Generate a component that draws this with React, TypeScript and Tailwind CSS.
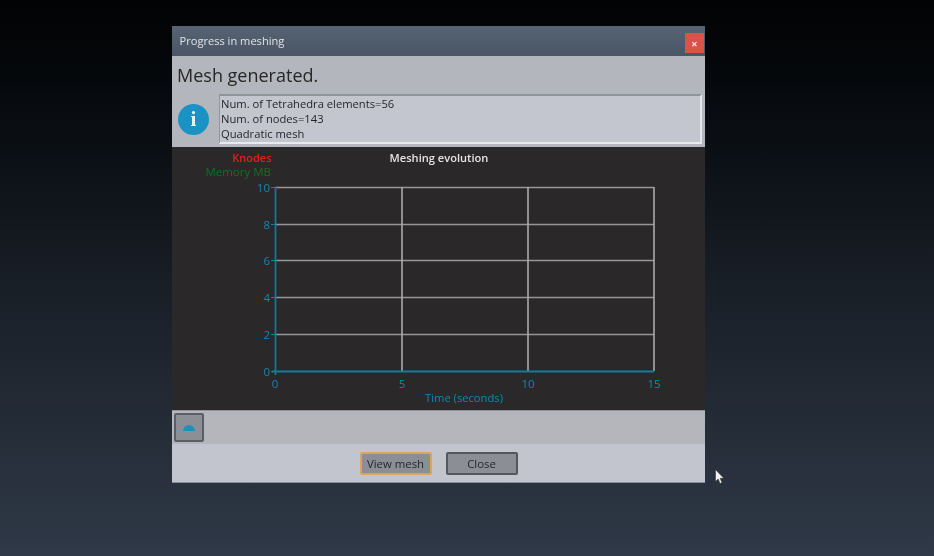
import React from "react";

const font = { fontFamily: '"Open Sans","Noto Sans",sans-serif' };
const ys: [number, string][] = [[40, "10"], [77, "8"], [113, "6"], [150, "4"], [187, "2"], [224, "0"]];
const xs: [number, string][] = [[103, "0"], [230, "5"], [356, "10"], [482, "15"]];

function Chart() {
  return (
    <svg width="533" height="263" viewBox="0 0 533 263" className="block" fontFamily='"Open Sans","Noto Sans",sans-serif'>
      <text x="99.5" y="14.5" textAnchor="end" fontSize="11" fontWeight="600" fill="#e5201a">Knodes</text>
      <text x="99" y="29" textAnchor="end" fontSize="11.5" fill="#0f7322">Memory MB</text>
      <text x="267" y="14.5" textAnchor="middle" fontSize="11.1" fontWeight="600" fill="#e4e4e4">Meshing evolution</text>
      {ys.slice(0, 5).map(([y]) => (
        <line key={y} x1="103" x2="482" y1={y + 0.5} y2={y + 0.5} stroke="#969696" strokeWidth="1.7" />
      ))}
      {xs.slice(1).map(([x]) => (
        <line key={x} x1={x} x2={x} y1="40" y2="224" stroke="#ababab" strokeWidth="1.6" />
      ))}
      <line x1="100" x2="482" y1="224.5" y2="224.5" stroke="#127d9c" strokeWidth="1.8" />
      <line x1="103.5" x2="103.5" y1="40" y2="228" stroke="#1a7590" strokeWidth="1.8" />
      {ys.map(([y, t]) => (
        <g key={t}>
          <line x1="99" x2="104" y1={y + 0.5} y2={y + 0.5} stroke="#127d9c" strokeWidth="1" />
          <text x="98" y={y + 4.5} textAnchor="end" fontSize="11.5" fill="#1488b2">{t}</text>
        </g>
      ))}
      {xs.map(([x, t]) => (
        <text key={t} x={x} y="240.5" textAnchor="middle" fontSize="11.5" fill="#1488b2">{t}</text>
      ))}
      <text x="292" y="254.5" textAnchor="middle" fontSize="11.2" fill="#1488b2">Time (seconds)</text>
    </svg>
  );
}

export default function App() {
  return (
    <div className="relative w-[934px] h-[556px] overflow-hidden bg-gradient-to-b from-[#020304] via-[#181e26] to-[#2f3947] pl-[172px] pt-[26px]" style={font}>
      <div className="flex w-[533px] h-[457px] flex-col border-b border-[#8a8e96] bg-[#c2c5cd] blur-[0.4px]">
        <div className="flex h-[30px] shrink-0 items-start justify-between bg-gradient-to-b from-[#566373] to-[#4a5666] pr-[1px]">
          <span className="pl-[7.5px] pt-[7px] text-[11.1px] leading-[16px] text-[#e0e3e8]">Progress in meshing</span>
          <div className="mt-[7px] flex h-[20px] w-[19px] items-center justify-center bg-[#d9534a] text-[11px] font-bold leading-none text-[#f5e9e6]">×</div>
        </div>
        <div className="flex h-[91px] shrink-0 flex-col bg-[#b3b6bc] pl-[5px] pr-[3px]">
          <div className="pt-[6px] text-[18px] leading-[26px] text-[#262626]">Mesh generated.</div>
          <div className="mt-[6px] flex items-center">
            <div className="ml-[1px] flex h-[31px] w-[31px] shrink-0 items-center justify-center rounded-full bg-[#1a93c4] font-['Liberation_Serif',serif] text-[21px] font-bold leading-none text-[#e8f4f9]">i</div>
            <div className="ml-[10px] h-[50px] flex-1 border-t-2 border-r-2 border-b-2 border-l border-t-[#8f939a] border-r-[#e4e6ec] border-b-[#e8eaef] border-l-[#92969d] bg-[#c3c6cf] pl-[1px] text-[11.2px] leading-[15px] text-[#1f2226]">
              <div>Num. of Tetrahedra elements=56</div>
              <div>Num. of nodes=143</div>
              <div>Quadratic mesh</div>
            </div>
          </div>
        </div>
        <div className="h-[264px] shrink-0 border-b border-[#8f9298] bg-[#2a2828]">
          <Chart />
        </div>
        <div className="flex h-[33px] shrink-0 items-center bg-[#b4b6bc] pl-[1.5px]">
          <div className="flex h-[29px] w-[30px] items-center justify-center rounded-[2px] border-2 border-[#5b5e64] bg-[#8c8f95]">
            <svg width="14" height="8" viewBox="0 0 14 8"><path d="M1 7 A6 6 0 0 1 13 7 Z" fill="#1b93b8" /></svg>
          </div>
        </div>
        <div className="flex flex-1 items-start justify-center gap-[14px] pt-[8px]">
          <div className="flex h-[23px] w-[72px] items-center justify-center rounded-[2px] border-2 border-[#e0a354] bg-[#8b8e95] text-[11.4px] text-[#25272b]">View mesh</div>
          <div className="flex h-[23px] w-[72px] items-center justify-center rounded-[2px] border-2 border-[#54575d] bg-[#8b8e95] text-[11.4px] text-[#25272b]">Close</div>
        </div>
      </div>
      <svg className="absolute left-[715px] top-[469px]" width="10" height="16" viewBox="0 0 10 16">
        <path d="M0.5 0.5 V12.5 L3.2 10 L5 14.5 L7 13.7 L5.2 9.3 H8.8 Z" fill="#f2f2f2" stroke="#222" strokeWidth="0.5" />
      </svg>
    </div>
  );
}
